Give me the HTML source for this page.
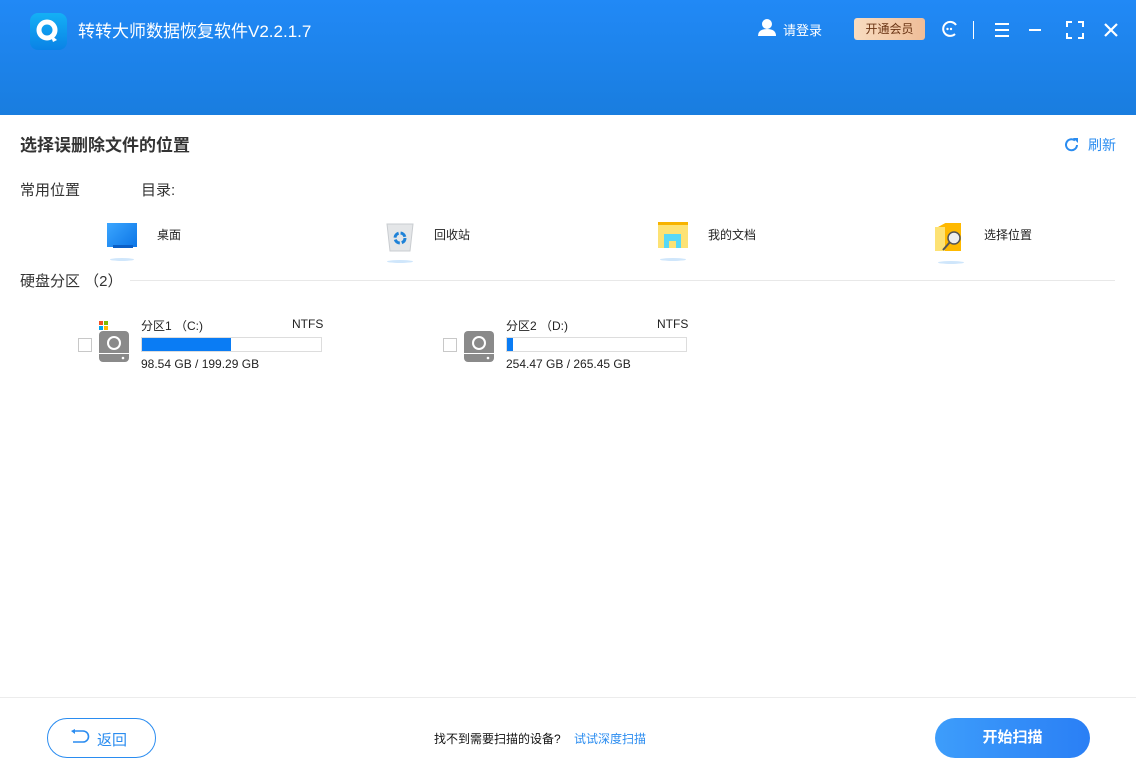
<!DOCTYPE html>
<html><head><meta charset="utf-8"><style>
*{margin:0;padding:0;box-sizing:border-box}
body{width:1136px;height:778px;overflow:hidden;background:#fff;font-family:"Liberation Sans","Noto Sans CJK SC",sans-serif;color:#222;position:relative}
.a{position:absolute}
.hdr{left:0;top:0;width:1136px;height:115px;background:linear-gradient(#2189f6,#197ddf)}
.t{white-space:nowrap}
</style></head><body>
<div class="a hdr"></div>
<div class="a" style="left:30px;top:13px;width:37px;height:37px;border-radius:8px;background:linear-gradient(#14b0f5,#0a82e6)">
<svg width="37" height="37"><circle cx="17" cy="17" r="8" fill="none" stroke="#fff" stroke-width="5"/><path d="M20 21 L27 27 L23 29 Z" fill="#fff"/></svg></div>
<div class="a t" style="left:78px;top:17px;font-size:17px;color:#fff">转转大师数据恢复软件V2.2.1.7</div>
<svg class="a" style="left:757px;top:18px" width="20" height="18"><circle cx="10" cy="6" r="5" fill="#fff"/><path d="M1 18 Q1 11 10 11 Q19 11 19 18Z" fill="#fff"/></svg>
<div class="a t" style="left:783px;top:20px;font-size:13px;color:#fff">请登录</div>
<div class="a t" style="left:854px;top:18px;width:71px;height:22px;border-radius:3px;background:linear-gradient(90deg,#f8dcc0,#efbd98);color:#6a3414;font-size:12px;text-align:center;line-height:22px">开通会员</div>
<svg class="a" style="left:940px;top:19px" width="20" height="20"><path d="M15 15 A7 7 0 1 1 16 6" fill="none" stroke="#fff" stroke-width="2"/><circle cx="7.5" cy="10" r="1.2" fill="#fff"/><circle cx="11" cy="10" r="1.2" fill="#fff"/></svg>
<div class="a" style="left:973px;top:21px;width:1px;height:18px;background:#fff"></div>
<svg class="a" style="left:994px;top:22px" width="16" height="16"><path d="M1 2H15M1 8H15M1 14H15" stroke="#fff" stroke-width="2"/></svg>
<div class="a" style="left:1029px;top:29px;width:12px;height:2px;background:#fff"></div>
<svg class="a" style="left:1066px;top:21px" width="18" height="18"><path d="M1 6V1H6M12 1H17V6M17 12V17H12M6 17H1V12" fill="none" stroke="#fff" stroke-width="2"/></svg>
<svg class="a" style="left:1104px;top:23px" width="14" height="14"><path d="M1 1L13 13M13 1L1 13" stroke="#fff" stroke-width="2.2"/></svg>

<div class="a t" style="left:20px;top:131px;font-size:17px;font-weight:bold;color:#333">选择误删除文件的位置</div>
<svg class="a" style="left:1064px;top:137px" width="16" height="16"><path d="M13 8A5.5 5.5 0 1 1 11 3.5" fill="none" stroke="#2a8cf0" stroke-width="2"/><path d="M9 1H14V6Z" fill="#2a8cf0"/></svg>
<div class="a t" style="left:1088px;top:135px;font-size:14px;color:#2a8cf0">刷新</div>
<div class="a t" style="left:20px;top:179px;font-size:15px;color:#333">常用位置</div>
<div class="a t" style="left:141px;top:179px;font-size:15px;color:#333">目录:</div>

<div class="a" style="left:107px;top:223px;width:30px;height:24px;background:linear-gradient(135deg,#3ba6ff,#0c75e6)"></div>
<div class="a" style="left:113px;top:245px;width:20px;height:3px;background:#0b5fc6"></div>
<div class="a" style="left:110px;top:258px;width:24px;height:3px;border-radius:50%;background:#cfe6fb"></div>
<div class="a t" style="left:157px;top:226px;font-size:12px">桌面</div>

<svg class="a" style="left:385px;top:220px" width="30" height="32"><path d="M2 4H28L25 31H5Z" fill="#e4e6e8" stroke="#c9ccd0"/><circle cx="15" cy="18" r="5" fill="none" stroke="#1e82d8" stroke-width="3" stroke-dasharray="6 2"/></svg>
<div class="a" style="left:387px;top:260px;width:26px;height:3px;border-radius:50%;background:#cfe6fb"></div>
<div class="a t" style="left:434px;top:226px;font-size:12px">回收站</div>

<div class="a" style="left:658px;top:222px;width:30px;height:26px;background:#fde274;border-top:3px solid #f7b300"></div>
<div class="a" style="left:664px;top:234px;width:17px;height:14px;background:#58d8f7"></div>
<div class="a" style="left:669px;top:241px;width:7px;height:7px;background:#fde274"></div>
<div class="a" style="left:660px;top:258px;width:26px;height:3px;border-radius:50%;background:#cfe6fb"></div>
<div class="a t" style="left:708px;top:226px;font-size:12px">我的文档</div>

<div class="a" style="left:935px;top:223px;width:26px;height:28px;background:#ffb900;clip-path:polygon(0 20%,40% 0,100% 0,100% 100%,0 100%)"></div>
<div class="a" style="left:935px;top:227px;width:10px;height:24px;background:#fde274"></div>
<svg class="a" style="left:940px;top:228px" width="24" height="26"><circle cx="14" cy="10" r="6" fill="#eee" stroke="#555" stroke-width="1.5"/><path d="M10 14L3 22" stroke="#555" stroke-width="2"/></svg>
<div class="a" style="left:938px;top:261px;width:26px;height:3px;border-radius:50%;background:#cfe6fb"></div>
<div class="a t" style="left:984px;top:226px;font-size:12px">选择位置</div>

<div class="a t" style="left:20px;top:270px;font-size:15px;color:#333">硬盘分区 （2）</div>
<div class="a" style="left:130px;top:280px;width:985px;height:1px;background:#e8e8e8"></div>

<div class="a" style="left:78px;top:338px;width:14px;height:14px;border:1px solid #c8c8c8"></div>
<div class="a" style="left:99px;top:321px;width:4px;height:4px;background:#f25022"></div><div class="a" style="left:104px;top:321px;width:4px;height:4px;background:#7fba00"></div><div class="a" style="left:99px;top:326px;width:4px;height:4px;background:#00a4ef"></div><div class="a" style="left:104px;top:326px;width:4px;height:4px;background:#ffb900"></div>
<svg class="a" style="left:99px;top:331px" width="30" height="32"><rect x="0" y="0" width="30" height="31" rx="4" fill="#8a8a8a"/><circle cx="15" cy="12" r="6" fill="none" stroke="#fff" stroke-width="2"/><rect x="0" y="22" width="30" height="1" fill="#fff"/><circle cx="24" cy="27" r="1.3" fill="#fff"/></svg>
<div class="a t" style="left:141px;top:317px;font-size:12px">分区1 （C:)</div>
<div class="a t" style="left:292px;top:317px;font-size:12px">NTFS</div>
<div class="a" style="left:141px;top:337px;width:181px;height:15px;border:1px solid #ddd"><div style="width:89px;height:13px;background:#0a7cf4"></div></div>
<div class="a t" style="left:141px;top:357px;font-size:12px">98.54 GB / 199.29 GB</div>

<div class="a" style="left:443px;top:338px;width:14px;height:14px;border:1px solid #c8c8c8"></div>
<svg class="a" style="left:464px;top:331px" width="30" height="32"><rect x="0" y="0" width="30" height="31" rx="4" fill="#8a8a8a"/><circle cx="15" cy="12" r="6" fill="none" stroke="#fff" stroke-width="2"/><rect x="0" y="22" width="30" height="1" fill="#fff"/><circle cx="24" cy="27" r="1.3" fill="#fff"/></svg>
<div class="a t" style="left:506px;top:317px;font-size:12px">分区2 （D:)</div>
<div class="a t" style="left:657px;top:317px;font-size:12px">NTFS</div>
<div class="a" style="left:506px;top:337px;width:181px;height:15px;border:1px solid #ddd"><div style="width:6px;height:13px;background:#0a7cf4"></div></div>
<div class="a t" style="left:506px;top:357px;font-size:12px">254.47 GB / 265.45 GB</div>

<div class="a" style="left:0;top:697px;width:1136px;height:1px;background:#ececec"></div>
<div class="a" style="left:47px;top:718px;width:109px;height:40px;border:1px solid #2a8cf0;border-radius:20px"></div>
<svg class="a" style="left:70px;top:729px" width="20" height="16"><path d="M5 2H13A5 5 0 0 1 13 13H3" fill="none" stroke="#2a8cf0" stroke-width="1.6"/><path d="M1 2L5 0V5Z" fill="#2a8cf0"/></svg>
<div class="a t" style="left:97px;top:729px;font-size:15px;color:#2a8cf0">返回</div>
<div class="a t" style="left:434px;top:730px;font-size:12px;color:#111">找不到需要扫描的设备?</div>
<div class="a t" style="left:574px;top:730px;font-size:12px;color:#2a8cf0">试试深度扫描</div>
<div class="a t" style="left:935px;top:718px;width:155px;height:40px;border-radius:20px;background:linear-gradient(90deg,#3d9dfb,#2a7ff5);color:#fff;font-size:15px;font-weight:bold;text-align:center;line-height:40px">开始扫描</div>
</body></html>
